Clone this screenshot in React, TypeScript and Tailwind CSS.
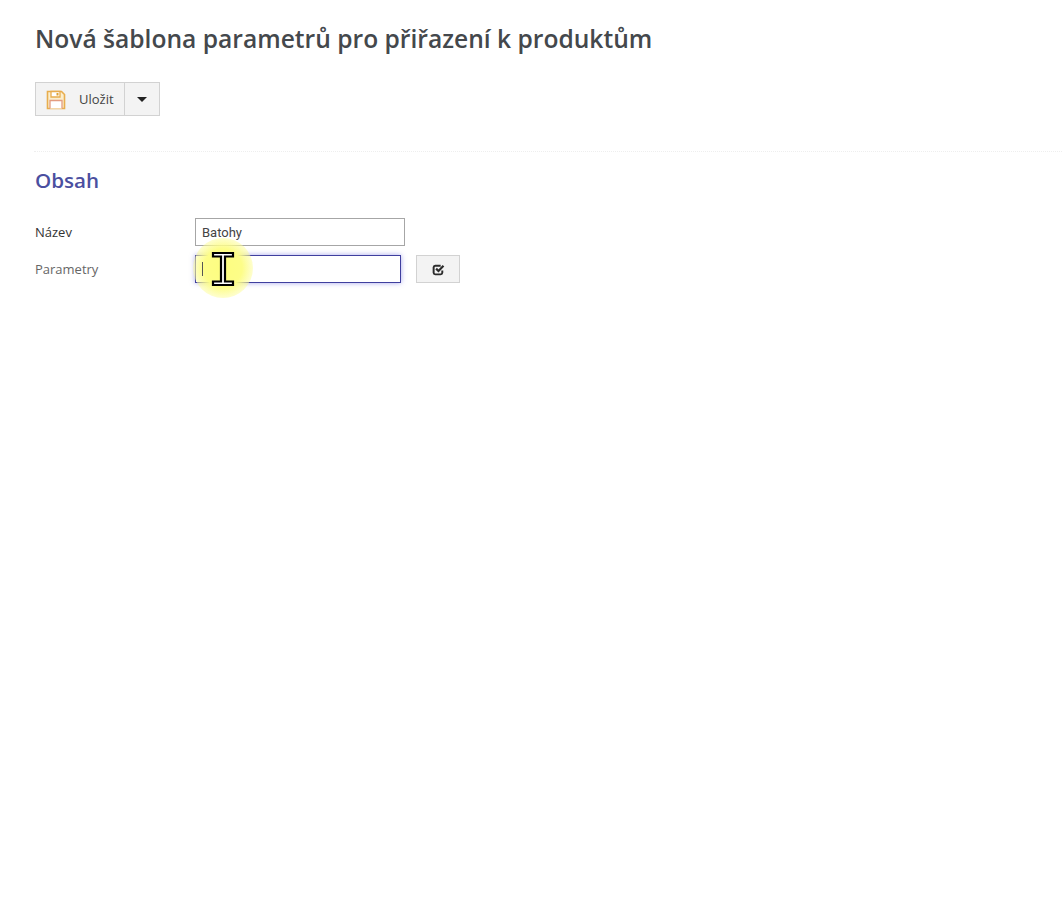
function SaveIcon() {
  return (
    <svg width="20" height="20" viewBox="0 0 20 20" fill="none">
      <path d="M1.5 1.5h14l3 3v14h-17z" fill="#fbeecd" stroke="#e8ad4e" strokeWidth="1.6" />
      <path d="M5 1.5h9v5.5H5z" fill="#fff" stroke="#e8ad4e" strokeWidth="1.3" />
      <path d="M10.5 3h2v2.5h-2z" fill="#e0a030" />
      <path d="M4 18.5V10.5h12v8" fill="#fff" stroke="#e39c80" strokeWidth="1.3" />
    </svg>
  );
}

function CheckIcon() {
  return (
    <svg width="13" height="13" viewBox="0 0 12 12" fill="none">
      <path
        d="M9.5 7v2A1.6 1.6 0 0 1 8 10.5H3A1.6 1.6 0 0 1 1.5 9V4A1.6 1.6 0 0 1 3 2.5h5"
        stroke="#2b2b2b"
        strokeWidth="1.8"
      />
      <path d="M3.8 5.2 6 7.4l4.6-4.8" stroke="#2b2b2b" strokeWidth="2" />
    </svg>
  );
}

function CursorHighlight() {
  return (
    <div className="pointer-events-none absolute left-[-3px] top-[-18px] h-[60px] w-[60px] rounded-full bg-[radial-gradient(circle,#fdfd80_0%,#fdfd88_45%,rgba(253,253,150,0.6)_65%,rgba(253,253,170,0)_90%)]">
      <svg className="absolute left-[18px] top-[13px]" width="24" height="36" viewBox="0 0 24 36">
        <path
          d="M2 2h20v3.5h-8v25h8V34H2v-3.5h8v-25H2z"
          fill="#fff"
          stroke="#000"
          strokeWidth="2.2"
        />
      </svg>
    </div>
  );
}

export default function App() {
  return (
    <div className="min-h-[924px] bg-white font-['Open_Sans',sans-serif] text-[#44484c]">
      <div className="pl-[35px] pt-[21px]">
        <h1 className="text-[24.6px] font-semibold leading-[36px]">
          Nová šablona parametrů pro přiřazení k produktům
        </h1>

        <div className="mt-[25px] flex h-[34px] w-[125px] border border-[#d2d2d2] bg-[#f3f3f3]">
          <button className="flex w-[88px] items-center pl-[10px] pt-[1px] text-[13px] text-[#444]">
            <SaveIcon />
            <span className="ml-[13px]">Uložit</span>
          </button>
          <button className="flex flex-1 items-center justify-center border-l border-[#d2d2d2]">
            <span className="h-0 w-0 border-x-[5px] border-t-[5px] border-x-transparent border-t-[#222]" />
          </button>
        </div>
      </div>

      <div className="ml-[34px] mt-[35px] border-t border-dotted border-[#eeeeee]" />

      <div className="pl-[35px]">
        <h2 className="mt-[13px] text-[20.6px] font-semibold leading-[30px] text-[#4b4fa0]">Obsah</h2>

        <div className="mt-[23px] flex items-center">
          <label className="w-[160px] pt-[1px] text-[13px] font-medium text-[#333]">Název</label>
          <input
            readOnly
            value="Batohy"
            className="h-[28px] w-[210px] border border-[#a6a6a6] bg-white px-[6px] font-['Roboto',sans-serif] text-[13px] text-[#444] outline-none"
          />
        </div>

        <div className="mt-[9px] flex items-center">
          <label className="w-[160px] pt-[1px] text-[13px] text-[#666]">Parametry</label>
          <div className="relative h-[28px] w-[206px] border border-[#3f3f9e] bg-white shadow-[0_0_5px_rgba(80,80,220,0.5)]">
            <CursorHighlight />
            <span className="absolute left-[6px] top-[6px] h-[14px] w-px bg-[#555]" />
          </div>
          <button className="ml-[15px] flex h-[28px] w-[44px] items-center justify-center border border-[#d2d2d2] bg-[#f3f3f3]">
            <CheckIcon />
          </button>
        </div>
      </div>
    </div>
  );
}
